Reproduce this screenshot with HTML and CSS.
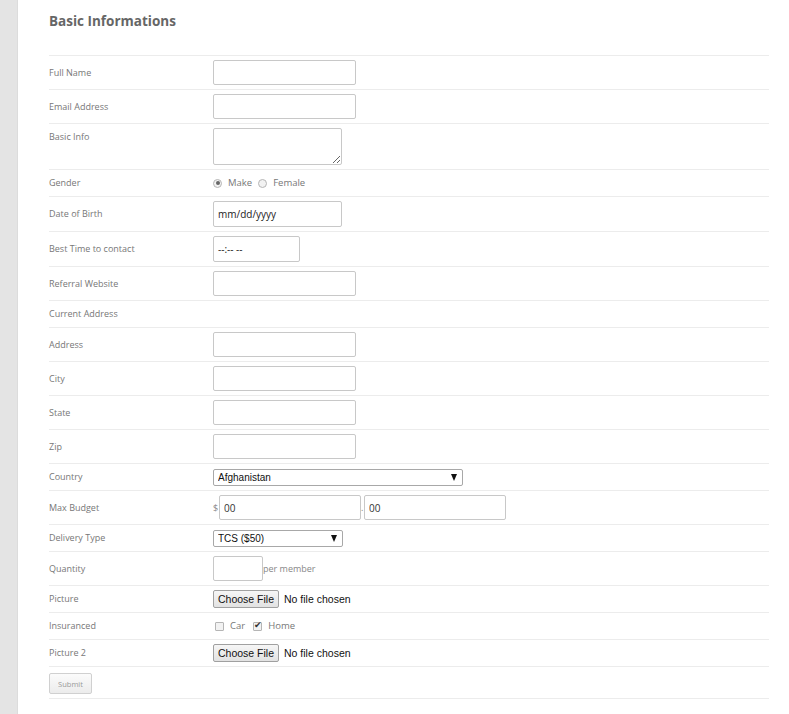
FILE: index.html
```html
<!doctype html>
<html>
<head>
  <meta charset="UTF-8">
  <title>Basic Informations</title>
  <link rel="stylesheet" href="styles.css">
</head>
<body>
  <div class="side"></div>
  <div class="main">
    <h3 class="title">Basic Informations</h3>
    <form class="form">
      <div class="row"><label class="lbl">Full Name</label><input class="txt" type="text"></div>
      <div class="row"><label class="lbl">Email Address</label><input class="txt" type="text"></div>
      <div class="row top"><label class="lbl">Basic Info</label><textarea class="area"></textarea></div>
      <div class="row"><label class="lbl">Gender</label>
        <span class="opts">
          <input class="radio" type="radio" name="g" checked><span>Make</span>
          <input class="radio" type="radio" name="g"><span>Female</span>
        </span>
      </div>
      <div class="row"><label class="lbl">Date of Birth</label><input class="txt date" type="text" placeholder="mm/dd/yyyy"></div>
      <div class="row"><label class="lbl">Best Time to contact</label><input class="txt time" type="text" placeholder="--:-- --"></div>
      <div class="row"><label class="lbl">Referral Website</label><input class="txt" type="text"></div>
      <div class="row"><label class="lbl">Current Address</label></div>
      <div class="row"><label class="lbl">Address</label><input class="txt" type="text"></div>
      <div class="row"><label class="lbl">City</label><input class="txt" type="text"></div>
      <div class="row"><label class="lbl">State</label><input class="txt" type="text"></div>
      <div class="row"><label class="lbl">Zip</label><input class="txt" type="text"></div>
      <div class="row"><label class="lbl">Country</label>
        <span class="sel country"><select><option>Afghanistan</option></select></span>
      </div>
      <div class="row"><label class="lbl">Max Budget</label>
        <span class="unit cur">$</span><input class="txt money" type="text" value="00"><span class="unit dot">.</span><input class="txt money" type="text" value="00">
      </div>
      <div class="row"><label class="lbl">Delivery Type</label>
        <span class="sel delivery"><select><option>TCS ($50)</option></select></span>
      </div>
      <div class="row"><label class="lbl">Quantity</label><input class="txt qty" type="text"><span class="unit">per member</span></div>
      <div class="row"><label class="lbl">Picture</label><input class="file" type="file"></div>
      <div class="row"><label class="lbl">Insuranced</label>
        <span class="opts">
          <input class="check" type="checkbox"><span>Car</span>
          <input class="check" type="checkbox" checked><span>Home</span>
        </span>
      </div>
      <div class="row"><label class="lbl">Picture 2</label><input class="file" type="file"></div>
      <div class="row last"><button class="submit" type="button">Submit</button></div>
    </form>
  </div>
</body>
</html>
```
FILE: styles.css
```css
*{box-sizing:border-box;}
html,body{margin:0; height:100%;}
body{display:flex; background:#fff; font-family:"Open Sans", Arial, sans-serif; color:#666;}
.side{width:18px; background:#e4e4e4; border-right:1px solid #dcdcdc; flex:none;}
.main{flex:1; padding:0 20px 0 31px;}
.title{margin:0; padding-top:11px; height:55px; font-size:13.5px; line-height:20px; font-weight:bold; color:#666;}

.form{margin:0;}
.row{display:flex; align-items:center; border-top:1px solid #ececec; padding:4px 0; min-height:27px;}
.row.top{align-items:flex-start;}
.row.last{border-bottom:1px solid #ececec; padding:5px 0 4px;}
.lbl{width:164px; flex:none; font-size:9px; line-height:18px; color:#777;}

.txt{width:143px; height:25px; border:1px solid #c8c8c8; border-radius:2px; padding:0 4px;
     font:10px "Open Sans", Arial, sans-serif; color:#333; background:#fff; margin:0;}
.txt::placeholder{color:#222; opacity:1;}
.date{width:129px; height:26px;}
.time{width:87px; height:26px;}
.money{width:142px;}
.qty{width:50px;}
.area{width:129px; height:37px; border:1px solid #c8c8c8; border-radius:2px; margin:0; padding:2px 4px;
      font:10px "Open Sans", Arial, sans-serif;}
.unit{font-size:9px; color:#888; line-height:18px; white-space:nowrap;}
.cur{width:6px;}
.dot{width:3px;}

.opts{display:flex; align-items:center; font-size:9.5px; color:#777; line-height:18px;}
.opts span{margin:0 6px 0 6px;}
.radio,.check{appearance:none; margin:0; width:9px; height:9px; border:1px solid #b5b5b5; background:#f2f2f2; position:relative;}
.radio{border-radius:50%;}
.check{border-radius:1px; margin-left:2px;}
.radio:checked::after{content:""; position:absolute; left:1.5px; top:1.5px; width:4px; height:4px; border-radius:50%; background:#666;}
.check:checked::after{content:"\2714"; position:absolute; left:0; top:-4px; font-size:9px; color:#333; line-height:12px;}

.sel{position:relative; display:flex;}
.sel select{appearance:none; display:block; height:17px; width:100%; border:1px solid #a8a8a8; border-radius:2px; background:#fff;
            font:10px "Liberation Sans", Arial, sans-serif; color:#111; padding:0 4px; margin:0;}
.sel::after{content:""; position:absolute; right:6px; top:5px; border-style:solid; border-width:7px 3.5px 0 3.5px;
            border-color:#111 transparent transparent transparent; pointer-events:none;}
.country{width:250px;}
.delivery{width:130px;}

.file{font:10.5px "Liberation Sans", Arial, sans-serif; color:#111; height:18px;}
.file::file-selector-button{font:10.5px "Liberation Sans", Arial, sans-serif; height:18px; padding:0 4px; margin-right:5px;
  border:1px solid #a0a0a0; border-radius:2px; background:linear-gradient(#f6f6f6,#e2e2e2); color:#111;}

.submit{width:43px; height:21px; font:7.5px "Open Sans", Arial, sans-serif; color:#999; border:1px solid #d0d0d0; border-radius:2px;
        background:linear-gradient(#fbfbfb,#ececec); padding:0; margin-top:1px;}
```
